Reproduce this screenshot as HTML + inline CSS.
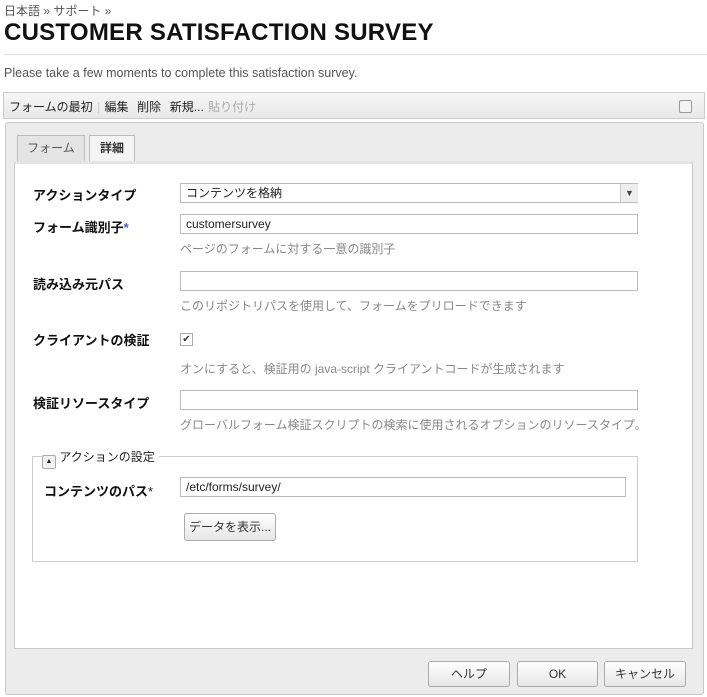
<html><head><style>
body{margin:0;width:707px;height:697px;background:#fff;font-family:"Liberation Sans","Noto Sans CJK JP",sans-serif;font-size:12px;color:#222;position:relative;overflow:hidden}
.a{position:absolute}
.lbl{position:absolute;left:33px;font-weight:bold;font-size:13px;color:#111}
.inp{position:absolute;left:180px;border:1px solid #bbb;background:#fff;font-size:12px;line-height:18px;padding-left:5px;box-sizing:border-box;width:458px;height:20px}
.hint{position:absolute;left:180px;color:#888;font-size:12px}
.btn{position:absolute;top:661px;height:24px;border:1px solid #aaa;border-radius:3px;background:linear-gradient(#fff,#e6e6e6);text-align:center;line-height:24px;font-size:12px;color:#333}
</style></head><body>
<div class="a" style="left:4px;top:2px;color:#555;font-size:12px">日本語 » サポート »</div>
<div class="a" style="left:4px;top:19px;font-size:24px;font-weight:bold;color:#111;letter-spacing:0.25px">CUSTOMER SATISFACTION SURVEY</div>
<div class="a" style="left:4px;top:54px;width:703px;height:1px;background:#ddd"></div>
<div class="a" style="left:4px;top:66px;color:#555;font-size:12.5px">Please take a few moments to complete this satisfaction survey.</div>
<div class="a" style="left:3px;top:92px;width:702px;height:27px;border:1px solid #ccc;background:linear-gradient(#f6f6f6,#e8e8e8);box-sizing:border-box"></div>
<div class="a" style="left:9px;top:98px;font-size:12px;color:#222;word-spacing:1px">フォームの最初 <span style="color:#ccc">|</span> 編集&nbsp; 削除&nbsp; 新規... <span style="color:#aaa">貼り付け</span></div>
<div class="a" style="left:679px;top:100px;width:11px;height:11px;border:1px solid #999;border-radius:2px;background:#f4f4f4"></div>
<div class="a" style="left:5px;top:122px;width:699px;height:573px;border:1px solid #c8c8c8;border-radius:3px;background:#ececec;box-sizing:border-box"></div>
<div class="a" style="left:17px;top:135px;width:68px;height:26px;border:1px solid #bbb;border-bottom:none;background:#e4e4e4;box-sizing:border-box;text-align:center;line-height:24px;color:#555">フォーム</div>
<div class="a" style="left:89px;top:135px;width:46px;height:27px;border:1px solid #bbb;border-bottom:none;background:#f4f4f4;box-sizing:border-box;text-align:center;line-height:24px;font-weight:bold;color:#333">詳細</div>
<div class="a" style="left:14px;top:161px;width:679px;height:488px;border:1px solid #c8c8c8;background:#fff;box-sizing:border-box;border-top:3px solid #e4e4e4"></div>
<div class="lbl" style="top:185px">アクションタイプ</div>
<div class="inp" style="top:183px">コンテンツを格納</div>
<div class="a" style="left:620px;top:184px;width:17px;height:18px;background:#eee;border-left:1px solid #ccc;font-size:9px;text-align:center;line-height:18px;color:#444">▼</div>
<div class="lbl" style="top:217px">フォーム識別子<span style="color:#36c">*</span></div>
<div class="inp" style="top:214px">customersurvey</div>
<div class="hint" style="top:240px">ページのフォームに対する一意の識別子</div>
<div class="lbl" style="top:274px">読み込み元パス</div>
<div class="inp" style="top:271px"></div>
<div class="hint" style="top:297px">このリポジトリパスを使用して、フォームをプリロードできます</div>
<div class="lbl" style="top:330px">クライアントの検証</div>
<div class="a" style="left:180px;top:333px;width:11px;height:11px;border:1px solid #aaa;font-size:10px;line-height:11px;text-align:center;color:#333">✔</div>
<div class="hint" style="top:360px">オンにすると、検証用の java-script クライアントコードが生成されます</div>
<div class="lbl" style="top:393px">検証リソースタイプ</div>
<div class="inp" style="top:390px"></div>
<div class="hint" style="top:416px">グローバルフォーム検証スクリプトの検索に使用されるオプションのリソースタイプ。</div>
<div class="a" style="left:32px;top:456px;width:606px;height:106px;border:1px solid #ccc;box-sizing:border-box"></div>
<div class="a" style="left:42px;top:448px;background:#fff;padding-right:4px;font-size:12px;color:#222"><span style="display:inline-block;width:12px;height:12px;border:1px solid #aaa;border-radius:2px;font-size:7px;line-height:12px;text-align:center;vertical-align:-2px;background:#f2f2f2">▲</span> アクションの設定</div>
<div class="lbl" style="left:44px;top:481px">コンテンツのパス<span style="font-weight:normal">*</span></div>
<div class="inp" style="top:477px;width:446px">/etc/forms/survey/</div>
<div class="a" style="left:184px;top:513px;width:92px;height:28px;border:1px solid #aaa;border-radius:3px;background:linear-gradient(#fff,#e6e6e6);box-sizing:border-box;text-align:center;line-height:26px;color:#333">データを表示...</div>
<div class="btn" style="left:428px;width:80px">ヘルプ</div>
<div class="btn" style="left:517px;width:79px">OK</div>
<div class="btn" style="left:604px;width:80px">キャンセル</div>
</body></html>
